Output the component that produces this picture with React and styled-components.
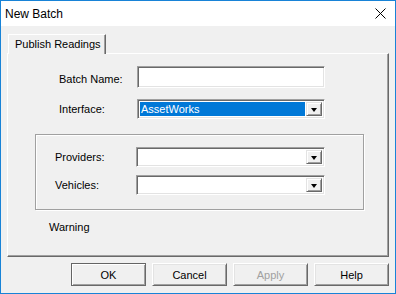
import styled, { createGlobalStyle } from "styled-components";

const GlobalStyle = createGlobalStyle`
  body {
    margin: 0;
    font-family: "Liberation Sans", Arial, sans-serif;
    font-size: 11px;
    color: #000;
  }
`;

const Window = styled.div`
  width: 396px;
  height: 294px;
  box-sizing: border-box;
  border: 1px solid #1883d7;
  display: flex;
  flex-direction: column;
  background: #f0f0f0;
`;

const TitleBar = styled.div`
  height: 25px;
  background: #fff;
  display: flex;
  align-items: center;
  justify-content: space-between;
  padding: 0 9px 0 4px;
`;

const Title = styled.span`
  font-size: 12px;
  padding-top: 1px;
`;

const Body = styled.div`
  flex: 1;
  display: flex;
  flex-direction: column;
  padding: 8px 6px 6px 6px;
`;

const TabStrip = styled.div`
  height: 19px;
  display: flex;
  align-items: flex-end;
  padding-left: 1px;
  position: relative;
  z-index: 1;
`;

const Tab = styled.div`
  width: 98px;
  height: 20px;
  box-sizing: border-box;
  border-top: 1px solid #fff;
  border-left: 1px solid #fff;
  border-right: 1px solid #696969;
  box-shadow: inset -1px 0 #a0a0a0;
  background: #f0f0f0;
  margin-bottom: -1px;
  padding: 3px 0 0 6px;
`;

const Panel = styled.div`
  height: 204px;
  box-sizing: border-box;
  border-top: 1px solid #fff;
  border-left: 1px solid #fff;
  border-right: 1px solid #696969;
  border-bottom: 1px solid #696969;
  box-shadow: inset -1px -1px #a0a0a0;
  display: flex;
  flex-direction: column;
  padding-top: 12px;
`;

const Row = styled.div`
  display: flex;
  align-items: center;
  height: ${(p) => p.h}px;
  margin-top: ${(p) => p.mt || 0}px;
  padding-left: ${(p) => p.pl}px;
`;

const Label = styled.span`
  width: ${(p) => p.w}px;
  padding-top: ${(p) => p.pt || 0}px;
`;

const Sunken = styled.div`
  width: ${(p) => p.w}px;
  height: ${(p) => p.h}px;
  box-sizing: border-box;
  background: #fff;
  border-top: 1px solid #a0a0a0;
  border-left: 1px solid #a0a0a0;
  border-right: 1px solid #fff;
  border-bottom: 1px solid #fff;
  box-shadow: inset 1px 1px #696969, inset -1px -1px #e3e3e3;
  display: flex;
  padding: 2px;
`;

const ComboValue = styled.div`
  flex: 1;
  background: ${(p) => (p.selected ? "#0078d7" : "transparent")};
  color: #fff;
  display: flex;
  align-items: center;
  padding-left: 1px;
  margin-right: 1px;
`;

const ArrowButton = styled.div`
  width: 16px;
  box-sizing: border-box;
  background: #f0f0f0;
  border-top: 1px solid #e3e3e3;
  border-left: 1px solid #e3e3e3;
  border-right: 1px solid #696969;
  border-bottom: 1px solid #696969;
  box-shadow: inset 1px 1px #fff, inset -1px -1px #a0a0a0;
  display: flex;
  align-items: center;
  justify-content: center;
`;

const Arrow = styled.div`
  width: 0;
  height: 0;
  border-left: 3.5px solid transparent;
  border-right: 3.5px solid transparent;
  border-top: 4px solid #000;
  margin-top: 1px;
`;

const GroupBox = styled.div`
  width: 329px;
  height: 76px;
  box-sizing: border-box;
  margin: 15px 0 0 27px;
  border: 1px solid #a0a0a0;
  box-shadow: inset 1px 1px #fff, 1px 1px #fff;
  padding-top: 12px;
`;

const Warning = styled.div`
  margin: 11px 0 0 41px;
`;

const ButtonRow = styled.div`
  display: flex;
  justify-content: flex-end;
  gap: 6px;
  margin-top: 6px;
`;

const Button = styled.div`
  width: 75px;
  height: 23px;
  box-sizing: border-box;
  display: flex;
  align-items: center;
  justify-content: center;
  background: #f0f0f0;
  color: ${(p) => (p.disabled ? "#a0a0a0" : "#000")};
  border-top: 1px solid ${(p) => (p.primary ? "#646464" : "#fff")};
  border-left: 1px solid ${(p) => (p.primary ? "#646464" : "#fff")};
  border-right: 1px solid #696969;
  border-bottom: 1px solid #696969;
  box-shadow: ${(p) =>
    p.primary
      ? "inset 1px 1px #fff, inset -1px -1px #a0a0a0"
      : "inset 1px 1px #e3e3e3, inset -1px -1px #a0a0a0"};
`;

function Combo({ w, value, selected }) {
  return (
    <Sunken w={w} h={20}>
      <ComboValue selected={selected}>{value}</ComboValue>
      <ArrowButton>
        <Arrow />
      </ArrowButton>
    </Sunken>
  );
}

function CloseIcon() {
  return (
    <svg width="11" height="11" viewBox="0 0 11 11">
      <path d="M0.5 0.5 L10.5 10.5 M10.5 0.5 L0.5 10.5" stroke="#000" strokeWidth="1" />
    </svg>
  );
}

export default function App() {
  return (
    <>
      <GlobalStyle />
      <Window>
        <TitleBar>
          <Title>New Batch</Title>
          <CloseIcon />
        </TitleBar>
        <Body>
          <TabStrip>
            <Tab>Publish Readings</Tab>
          </TabStrip>
          <Panel>
            <Row h={22} pl={51}>
              <Label w={78} pt={3}>Batch Name:</Label>
              <Sunken w={188} h={22} />
            </Row>
            <Row h={20} mt={11} pl={51}>
              <Label w={78}>Interface:</Label>
              <Combo w={188} value="AssetWorks" selected />
            </Row>
            <GroupBox>
              <Row h={20} pl={19}>
                <Label w={81}>Providers:</Label>
                <Combo w={189} />
              </Row>
              <Row h={20} mt={8} pl={19}>
                <Label w={81}>Vehicles:</Label>
                <Combo w={189} />
              </Row>
            </GroupBox>
            <Warning>Warning</Warning>
          </Panel>
          <ButtonRow>
            <Button primary>OK</Button>
            <Button>Cancel</Button>
            <Button disabled>Apply</Button>
            <Button>Help</Button>
          </ButtonRow>
        </Body>
      </Window>
    </>
  );
}
